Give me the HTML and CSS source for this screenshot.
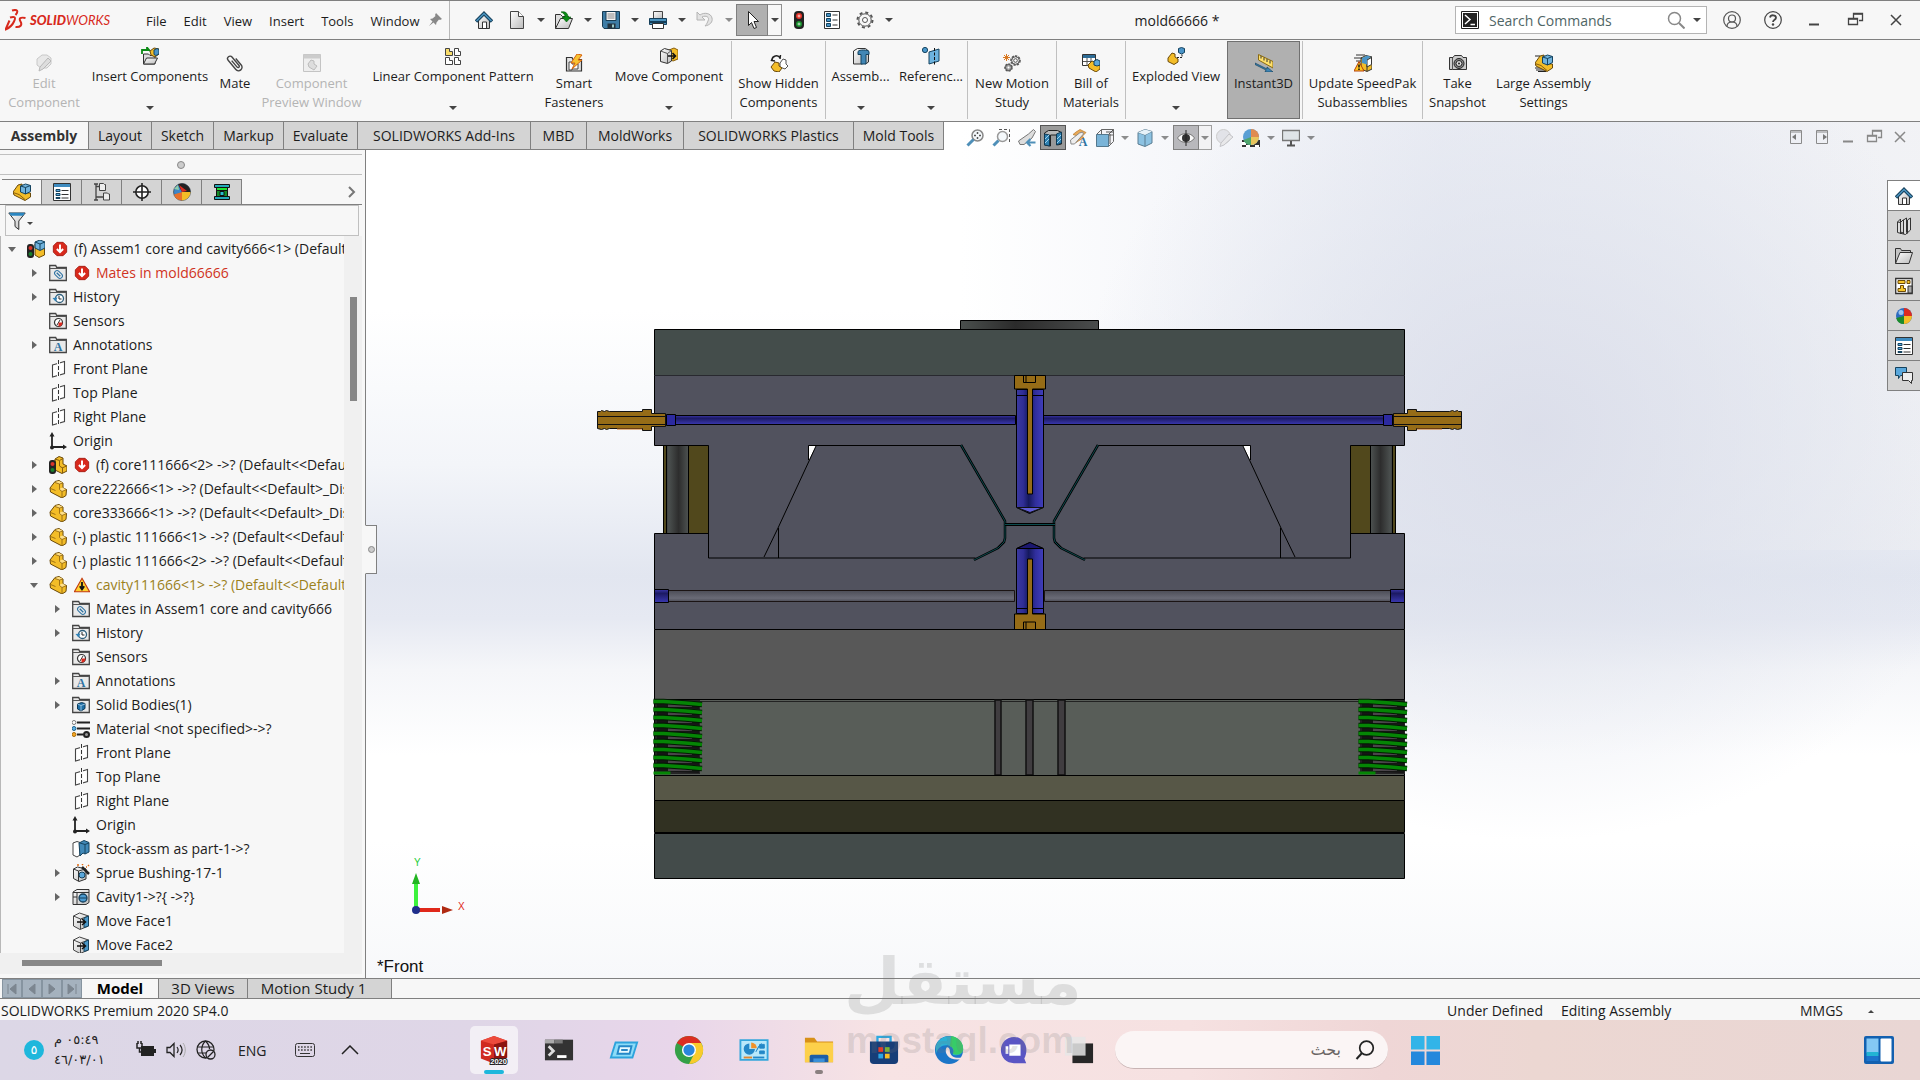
FILE: index.html
```
<!DOCTYPE html>
<html lang="en">
	<head>
		<meta charset="UTF-8" />
		<meta name="viewport" content="width=device-width, initial-scale=1.0" />
		<title>mold66666 *</title>

		<link rel="stylesheet" href="styles.css">
	</head>
	<body>
		<!-- shared icons -->
		<svg class="defs" aria-hidden="true">
			<defs>
				<linearGradient id="gBlue" x2="0" y2="1"><stop stop-color="#8fc4e8" /><stop offset="1" stop-color="#2a6c9c" /></linearGradient>
				<linearGradient id="gGray" x2="1" y2="1"><stop stop-color="#fff" /><stop offset="1" stop-color="#bbb" /></linearGradient>
			</defs>
			<symbol id="home" viewBox="0 0 18 18"><path d="M3.500 9v8.500h11V9L9 3.500z" fill="url(#gGray)" stroke="#333" /><path d="M7.500 17v-6h4v6" fill="#fff" stroke="#333" /><path d="M1 10.500 9 2.500l8 8" fill="none" stroke="#153f5a" stroke-width="3.500" /><path d="M1.500 10 9 2.500l7.500 7.500" fill="none" stroke="#4a94c0" stroke-width="1.500" /></symbol>
			<symbol id="new" viewBox="0 0 18 18"><path d="M2.500.5h8l5 5v12h-13z" fill="url(#gGray)" stroke="#444" /><path d="M10.500.5v5h5" fill="#fff" stroke="#444" /></symbol>
			<symbol id="open" viewBox="0 0 18 18"><path d="M.5 17.500v-14h5l2 2h6v3" fill="#ddd" stroke="#333" /><path d="m.5 17.500 5-10h12l-4 10z" fill="url(#gGray)" stroke="#333" /><path d="M6 1c4-1 7 1 7 5h3l-4.500 5L7 6h3c0-2-1-4-4-5z" fill="#0a8a14" stroke="#045b0a" stroke-width=".6" /></symbol>
			<symbol id="save" viewBox="0 0 18 18"><path d="M.5.5h17v17H2l-1.500-2z" fill="#3d7ca5" stroke="#173b52" /><path d="M4 .5h10v9H4z" fill="#f5f5f5" stroke="#173b52" /><path d="M5.500 3h7M5.500 5h7M5.500 7h7" stroke="#888" /><path d="M5.500 12.500h8v5h-8z" fill="#24333d" /><path d="M10 13.500h2v3h-2z" fill="#9cc" /></symbol>
			<symbol id="print" viewBox="0 0 18 18"><path d="M4.500 8V.5h9V8z" fill="url(#gGray)" stroke="#444" /><path d="M.5 7.500h17v6H.5z" fill="#4b93bf" stroke="#153f5a" /><path d="M1 10h16v2H1z" fill="#153f5a" /><path d="M3.500 12.500h11v5h-11z" fill="#fff" stroke="#333" /></symbol>
			<symbol id="undo" viewBox="0 0 18 18"><path d="M1 1v8h8L6 6c4-2 8 0 6 4-.5 1-1 3-3 5 5-1 8-4 7-8-1-5-8-6-12-3z" fill="#e3e3e3" stroke="#b4b4b4" /></symbol>
			<symbol id="cursor" viewBox="0 0 18 18"><path d="M5.500.5v14l3-3 2.500 6 2.500-1-2.500-6h4.500z" fill="#fff" stroke="#222" /></symbol>
			<symbol id="traffic" viewBox="0 0 18 18"><rect x="4" width="10" height="18" rx="4" fill="#222" /><circle cx="9" cy="5" r="3" fill="#e5342a" /><circle cx="9" cy="13" r="3" fill="#17902c" /><path d="M7.500 5h3M9 3.500v3M7.500 13h3M9 11.500v3" stroke="#fff" stroke-width=".7" /></symbol>
			<symbol id="list" viewBox="0 0 18 18"><path d="M1.500.5h15v17h-15z" fill="#fff" stroke="#333" /><path d="M3.500 2.500h4v3h-4zm0 5h4v3h-4zm0 5h4v3h-4z" fill="#4592c4" stroke="#15435f" /><path d="M9.500 4h5M9.500 9h5M9.500 14h5" stroke="#333" /></symbol>
			<symbol id="gear" viewBox="0 0 18 18"><circle cx="9" cy="9" r="7.500" fill="none" stroke="#555" stroke-width="2" stroke-dasharray="3 2.900" /><circle cx="9" cy="9" r="6.200" fill="#f7f7f7" stroke="#555" /><circle cx="9" cy="9" r="2.500" fill="#fff" stroke="#555" /></symbol>
			<symbol id="pin" viewBox="0 0 18 18"><path d="m10 2 6 6-2 1-1-.5-2.500 3L10 14l-2.500-2.500L3 15l3.500-4.500L4 8l2.500-.5 3-2.500L9 4z" fill="#888" /></symbol>
			<symbol id="term" viewBox="0 0 18 18"><path d="M.5.5h17v17H.5z" fill="#fff" stroke="#222" /><path d="M2 2h14v14H2z" fill="#222" /><path d="m4 4 5 4.500L4 13M9.500 13.500H14" fill="none" stroke="#fff" stroke-width="1.500" /></symbol>
			<symbol id="search" viewBox="0 0 18 18"><circle cx="7.500" cy="7.500" r="6" fill="none" stroke="currentColor" stroke-width="1.500" /><path d="m12 12 5.500 5.500" stroke="currentColor" stroke-width="2" /></symbol>
			<symbol id="user" viewBox="0 0 18 18"><circle cx="9" cy="9" r="8.300" fill="none" stroke="#555" stroke-width="1.200" /><circle cx="9" cy="7.500" r="3.500" fill="none" stroke="#555" stroke-width="1.200" /><path d="M4 15.500c0-3 2-4.500 5-4.500s5 1.500 5 4.500" fill="none" stroke="#555" stroke-width="1.200" /></symbol>
			<symbol id="help" viewBox="0 0 18 18"><circle cx="9" cy="9" r="8.300" fill="none" stroke="#444" stroke-width="1.200" /><path d="M6 6.500c.5-3 6-3 6 .2 0 2-3 2-3 4.300" fill="none" stroke="#444" stroke-width="1.800" /><circle cx="9" cy="13.500" r="1.200" fill="#444" /></symbol>
			<symbol id="min" viewBox="0 0 18 18"><path d="M4 13.500h10" stroke="currentColor" stroke-width="2" /></symbol>
			<symbol id="restore" viewBox="0 0 18 18"><path d="M7.500 7V2.500h9v7H13M2.500 7.500h9v6h-9z" fill="none" stroke="currentColor" stroke-width="1.300" /><path d="M7 3h10M2 8h10" stroke="currentColor" stroke-width="1.500" /></symbol>
			<symbol id="close" viewBox="0 0 18 18"><path d="m4 4 10 10M14 4 4 14" stroke="currentColor" stroke-width="1.500" /></symbol>
			<symbol id="panL" viewBox="0 0 18 18"><path d="M3.500 2.500h11v13h-11zM3 4h12" fill="none" stroke="#8a8a8a" /><path d="M9 6v6L5 9z" fill="#777" /></symbol>
			<symbol id="panR" viewBox="0 0 18 18"><path d="M3.500 2.500h11v13h-11zM3 4h12" fill="none" stroke="#8a8a8a" /><path d="M10 6v6l4-3z" fill="#777" /></symbol>
			<symbol id="part" viewBox="0 0 18 18"><path d="m1 8 5-6.500 4-1 4 2.500v5l3.500 1.500-.5 6-4 2.500L1.500 12z" fill="#f3bd28" stroke="#6b4a0a" /><path d="m6 2 4-1 4 2-3.500 1.500zM10 9l3.500-1.500L17 9.500 13 11.500z" fill="#ffe08a" /><path d="M6 2.500 10.500 4v5.500L13 11.500v6M10.500 4 14 3M13 11.500l4.500-2M1.500 8.500l5 2" fill="none" stroke="#8a5f0c" stroke-width=".8" /></symbol>
			<symbol id="asm" viewBox="0 0 18 18"><path d="m0 9 5-7 4-1v6l5 3h3.500v4L12 17.500 1 12z" fill="#f3bd28" stroke="#6b4a0a" /><path d="m0 9.500 6 2 6 5" fill="none" stroke="#8a5f0c" /><path d="m7.500 3 5-2 5 1.500v6l-5 2.500-5-2z" fill="#6fb2dc" stroke="#15435f" /><path d="m7.500 3 5 1.500 5-2M12.500 4.500V11" fill="none" stroke="#15435f" /></symbol>
			<symbol id="asmT" viewBox="0 0 18 18"><path d="m8 4 5-2.500L17.500 3v12L12 17.500 8 15z" fill="#f3bd28" stroke="#6b4a0a" /><path d="m8 2 5-2 5 2v6l-5 2.500L8 8z" fill="#6fb2dc" stroke="#15435f" /><path d="m8 2 5 2 5-2M13 4v6" fill="none" stroke="#15435f" /><rect y="4" width="7" height="14" rx="3" fill="#222" /><circle cx="3.500" cy="8" r="2" fill="#d8342a" /><circle cx="3.500" cy="14" r="2" fill="#17802c" /></symbol>
			<symbol id="partT" viewBox="0 0 18 18"><path d="m6 3 4-2.500L14 2v6l4 2v5l-5 2.500L6 14z" fill="#f3bd28" stroke="#6b4a0a" /><path d="m6 3 4.500 1.500L14 2.500M10.500 5v5l3 2v5M13 12l4.500-2" fill="none" stroke="#8a5f0c" /><rect y="4" width="7" height="14" rx="3" fill="#222" /><circle cx="3.500" cy="8" r="2" fill="#d8342a" /><circle cx="3.500" cy="14" r="2" fill="#17802c" /></symbol>
			<symbol id="folder" viewBox="0 0 18 18"><path d="M.7 16.500V1.500h6l1 2h9.600v13z" fill="#e9e9e9" stroke="#444" stroke-width="1.300" /><path d="M1 4.500h16" stroke="#555" /></symbol>
			<symbol id="clip" viewBox="0 0 18 18"><use href="#folder" /><g transform="rotate(-45 9.500 10.500)" fill="none" stroke="#2f73a3"><rect x="7" y="6" width="5" height="9" rx="2.500" /><path d="M9.500 8v5" stroke-width="1.300" /></g></symbol>
			<symbol id="history" viewBox="0 0 18 18"><use href="#folder" /><circle cx="10.500" cy="10.500" r="4" fill="#fff" stroke="#2d5e7c" stroke-width="1.300" /><path d="M10 8v3h2.500" fill="none" stroke="#222" /><path d="m3.500 10 3 3.500 2-4z" fill="#2f82b8" /></symbol>
			<symbol id="sensor" viewBox="0 0 18 18"><use href="#folder" /><circle cx="9.500" cy="10.500" r="4" fill="#fff" stroke="#333" stroke-width="1.200" /><path d="m8 13 3-5" stroke="#333" /><path d="M9.500 10.500h4a4 4 0 0 1-4 4z" fill="#dc2a20" /></symbol>
			<symbol id="solid" viewBox="0 0 18 18"><use href="#folder" /><path d="m5.500 8 4-1.500 3.500 1v5L9 15l-3.500-2z" fill="#1e6fa6" stroke="#0f3957" /><path d="m5.500 8 3.500 1.500L13 8M9 9.500V15" fill="none" stroke="#bfe0f5" stroke-width=".7" /></symbol>
			<symbol id="plane" viewBox="0 0 18 18"><path d="m3.500 5 12-3.500v12l-12 3.500z" fill="#fff" stroke="#444" stroke-width="1.100" /><path d="M9.500 0v18" stroke="#f7f7f7" stroke-width="3" /><path d="M9.500 0v18" stroke="#333" stroke-dasharray="4 2" /></symbol>
			<symbol id="origin" viewBox="0 0 18 18"><path d="M3 4v11h12" fill="none" stroke="#222" stroke-width="1.800" /><path d="M3 0 .5 4.500h5zM18 15l-4-2.500v5z" fill="#222" /><circle cx="3" cy="15.500" r="2" fill="#222" /></symbol>
			<symbol id="material" viewBox="0 0 18 18"><path d="M5 2.500h13M5 8.500h13M5 14.500h6" stroke="#222" stroke-width="1.800" /><circle cx="2" cy="2.500" r="2" fill="#fff" stroke="#777" /><circle cx="2" cy="8.500" r="2" fill="#5bb0e4" stroke="#1b5f8c" /><circle cx="2" cy="14.500" r="2" fill="#f5a623" stroke="#a76b0a" /><circle cx="14.500" cy="14.500" r="2.500" fill="#999" stroke="#222" stroke-width="2" /></symbol>
			<symbol id="stock" viewBox="0 0 18 18"><path d="m1 3 4-1.500 3 1V15l-3 2-4-2z" fill="#fff" stroke="#444" /><path d="m7 3 5-2.500 5 2V12l-4 2-2-1-3 3z" fill="#4189b8" stroke="#15435f" /><path d="m8 3 5 1.500L17 3M13 4.500V14" fill="none" stroke="#15435f" /></symbol>
			<symbol id="sprue" viewBox="0 0 18 18"><path d="m1.500 5 4-2L14 5v10l-7 2.500-5.500-3z" fill="url(#gGray)" stroke="#333" /><path d="m1.500 5 5 2 7-2M6.500 7v10" fill="none" stroke="#333" /><circle cx="10" cy="11" r="3" fill="#5aa8dc" stroke="#15435f" /><path d="m10 3 7 7" stroke="#222" stroke-width="2.500" /><path d="M5 1h2M10 0l1 1M14 3h1M16 1l1 1" stroke="#e06a10" stroke-width="1.500" /></symbol>
			<symbol id="cavity" viewBox="0 0 18 18"><path d="m1 4 4-2.500h12v13L14 16.500H1z" fill="url(#gGray)" stroke="#333" /><path d="M1 4.500h4V16M5 4.500h12M1 9h4" fill="none" stroke="#333" /><circle cx="11" cy="10" r="4" fill="#4a9ad0" stroke="#153f5a" stroke-width="1.300" /><path d="M7 10h8" stroke="#153f5a" /></symbol>
			<symbol id="face" viewBox="0 0 18 18"><path d="m1.500 4 6-3 9 3v10L8 17.500 1.500 14z" fill="url(#gGray)" stroke="#444" /><path d="m1.500 4 7 3 8-3M8.500 7v10" fill="none" stroke="#444" /><path d="m12 6 4.500-2v10L12 15.500z" fill="#4b98c8" stroke="#15435f" /><path d="M5 10h8M10 7l3.500 3-3.500 3" fill="none" stroke="#111" stroke-width="1.500" /></symbol>
			<symbol id="err" viewBox="0 0 18 18"><path d="M5.500 1.500h7l4 4v7l-4 4h-7l-4-4v-7z" fill="#d8291c" stroke="#a31a10" /><path d="M9 4v8M5.500 9 9 12.500 12.500 9" fill="none" stroke="#fff" stroke-width="2.200" /></symbol>
			<symbol id="warn" viewBox="0 0 18 18"><path d="m9 1.500 8.500 15H.5z" fill="#ffd02e" stroke="#c2390d" stroke-width="1.200" /><path d="M9 5.500v7M6.500 10.500 9 14l2.500-3.500" fill="none" stroke="#111" stroke-width="2" /></symbol>
			<symbol id="props" viewBox="0 0 18 18"><path d="M.5.5h17v17H.5z" fill="#fff" stroke="#333" /><path d="M1 1h16v3H1z" fill="#3f8cc0" /><path d="M3 6.500h4v2H3zm0 4h4v2H3zm0 4h4v1H3z" fill="#5baae0" stroke="#15435f" /><path d="M8.500 7.500h7M8.500 11.500h7M8.500 15h7" stroke="#333" /></symbol>
			<symbol id="config" viewBox="0 0 18 18"><path d="M3 1v16M3 3.500h4M3 14h7M1 1h4M1 17h4" stroke="#444" stroke-width="1.300" fill="none" /><path d="M6.500.5h4l1 1h1v6h-6zM10.500 10h4l1 1h1v6h-6z" fill="#eee" stroke="#444" /></symbol>
			<symbol id="target" viewBox="0 0 18 18"><circle cx="9" cy="9" r="6.200" fill="#fff" stroke="#222" stroke-width="1.600" /><path d="M9 0v18M0 9h18" stroke="#222" stroke-width="1.600" /></symbol>
			<symbol id="ball" viewBox="0 0 18 18"><circle cx="9" cy="9" r="8" fill="#2d6cc0" /><path d="M9 9V1a8 8 0 0 1 8 8z" fill="#dc2c20" /><path d="M9 9h8a8 8 0 0 1-8 8z" fill="#f4bd27" /><path d="M9 9v8a8 8 0 0 1-7.800-6z" fill="#1c8c2a" /><circle cx="6" cy="5.500" r="2.500" fill="#b8dcfa" opacity=".8" /></symbol>
			<symbol id="ball2" viewBox="0 0 18 18"><circle cx="9" cy="9" r="8.500" fill="#3d86c8" stroke="#333" stroke-width=".6" /><path d="M5 1.500a8.500 8.500 0 0 1 12.400 8L9 9z" fill="#222" /><path d="m6 2 8 6-5 1z" fill="#dc2c20" /><path d="M9 9h8.500A8.500 8.500 0 0 1 9 17.500z" fill="#f4bd27" /><path d="M1 11.500 9 9v8.500a8.500 8.500 0 0 1-8-6z" fill="#e8702a" /><path d="M1 6 5 2l1 5z" fill="#8fd0a8" /></symbol>
			<symbol id="mold" viewBox="0 0 18 18"><path d="M1.500 1.500h15v3h-15zm0 12h15v3h-15z" fill="#24a8b8" stroke="#111" /><path d="M3.500 4.500h11v3h-11z" fill="#1ee234" stroke="#111" /><path d="M3.500 7.500h11v6h-11z" fill="#148c28" stroke="#111" /><path d="M7 8.500h4v4H7z" fill="#26c0d0" stroke="#111" /></symbol>
			<symbol id="filter" viewBox="0 0 18 18"><path d="M.8 1h16.400l-6.400 8v8.500L7 14.500V9z" fill="url(#gGray)" stroke="#333" /><path d="M1 .8h16l-2 3H3z" fill="#2a86c0" /></symbol>
			<symbol id="editc" viewBox="0 0 18 18"><path d="m2 5 5-4h5l4 3v6l-4 4H6l-4-3z" fill="#e8e8e8" stroke="#c8c8c8" /><path d="m5 13 8-9 3 3-8 8-4 2z" fill="#ddd" stroke="#b8b8b8" /></symbol>
			<symbol id="insert" viewBox="0 0 18 18"><path d="M2.500 17V7h5l1.500 1.500h5V17z" fill="#ddd" stroke="#333" /><path d="m2.500 17 3-6h11l-3 6z" fill="url(#gGray)" stroke="#333" /><path d="M1 7V3h5V.5L9 4M2 3h6" fill="none" stroke="#0a8a14" stroke-width="1.800" /><path d="m9 4 4-3 5 1v5l-4 3-4-2z" fill="#f3bd28" stroke="#6b4a0a" /><path d="m13 3 3-1.500 2 1V7l-3 1.500-2-1z" fill="#4a94c8" stroke="#15435f" /></symbol>
			<symbol id="mate" viewBox="0 0 18 18"><g transform="rotate(-40 9 9)" fill="none" stroke="#444" stroke-width="1.400"><path d="M12.500 6v8.500a3.500 3.500 0 0 1-7 0v-12a2.500 2.500 0 0 1 5 0v11a1 1 0 0 1-2.500 0V5" /></g></symbol>
			<symbol id="preview" viewBox="0 0 18 18"><path d="M.5.5h17v17H.5z" fill="#eee" stroke="#c4c4c4" /><path d="M.5.5h17v4H.5z" fill="#ccc" /><path d="m5 10 3-4 3 1v3l3 2-3 4-5-3z" fill="#ddd" stroke="#bbb" /></symbol>
			<symbol id="pattern" viewBox="0 0 18 18"><path d="M1.500 1.500h4v3h3v4h-7z" fill="#f8dc6a" stroke="#444" /><path d="M10.500 1.500h4v3h2v4h-6zm0 9h4v3h2v4h-6zm-9 0h4v3h3v4h-7z" fill="#fff" stroke="#444" /></symbol>
			<symbol id="smart" viewBox="0 0 18 18"><path d="M1.500 17V3.500H7l1 2h8.500V17z" fill="#e4e4e4" stroke="#333" stroke-width="1.200" /><path d="M4 8h3v2h6v5H7v1H4z" fill="#fff" stroke="#444" /><path d="m12 0-6 9h4l-3 6 10-9h-4l4-5z" fill="#f7c331" stroke="#d8620c" /></symbol>
			<symbol id="move" viewBox="0 0 18 18"><path d="m9 3 5-2 4 2v9l-5 2-4-2z" fill="#f3bd28" stroke="#8a5f0c" /><path d="m.5 4 4-2.500 7 2V14l-4 2.500-7-2z" fill="url(#gGray)" stroke="#333" /><path d="m.5 4 7 2.500 4-3M7.500 6.500v10" fill="none" stroke="#555" /><path d="M8 9h7M12.500 6l3 3-3 3" fill="none" stroke="#111" stroke-width="1.600" /></symbol>
			<symbol id="hidden" viewBox="0 0 18 18"><path d="M2 6c0-4 6-6 8-2M3 3 1.500 6.500 5 7M10 5l.5-4" fill="none" stroke="#222" stroke-width="1.500" /><path d="m10 9 3-4 3 1v4l2 2-3 3-5-2z" fill="#fff" stroke="#555" /><path d="m1 13 4-5 4 1v3l3 2-3 4-5-1z" fill="#f3bd28" stroke="#6b4a0a" /></symbol>
			<symbol id="assemb" viewBox="0 0 18 18"><path d="m1.500 4 4-2.500h8l3 2.500v11l-3 2v-5h-3V17h-9z" fill="url(#gGray)" stroke="#333" /><path d="M6 4.500C7 2.500 16 2.500 17 4.500v3h-3V17H9V7.500H6z" fill="#4287b5" stroke="#15435f" /></symbol>
			<symbol id="refgeo" viewBox="0 0 18 18"><circle cx="3" cy="3" r="2.600" fill="#4a98cc" stroke="#15435f" /><path d="m7 5 10-3v12L7 17z" fill="#6db3df" stroke="#15435f" /><path d="M12.500 1v17" stroke="#111" stroke-dasharray="3 1.500" /></symbol>
			<symbol id="motion" viewBox="0 0 18 18"><path d="M3.500 0v7M0 3.500h7M1 1l5 5M6 1 1 6" stroke="#d97820" /><circle cx="12.500" cy="6.500" r="4.300" fill="#eee" stroke="#555" stroke-width="2" stroke-dasharray="2.200 1" /><circle cx="12.500" cy="6.500" r="3.800" fill="#eee" stroke="#555" /><circle cx="12.500" cy="6.500" r="1.800" fill="#fff" stroke="#555" /><circle cx="5.500" cy="13.500" r="3.300" fill="#aaa" stroke="#555" stroke-width="2" stroke-dasharray="2 1" /><circle cx="5.500" cy="13.500" r="3" fill="#aaa" stroke="#555" /><circle cx="5.500" cy="13.500" r="1" fill="#fff" /></symbol>
			<symbol id="bom" viewBox="0 0 18 18"><path d="M.5.5h13v11H.5z" fill="#fff" stroke="#333" /><path d="M1 1h12v3H1z" fill="#2d6c96" /><path d="M1 7.500h12M5 4v8M9 4v8" stroke="#555" /><path d="m6 11 4-4 6 2 2 3v3l-4 3-7-4z" fill="#f3bd28" stroke="#6b4a0a" /><path d="m12 7 3-1.500L18 7v4l-3 1-3-1z" fill="#5ea8d8" stroke="#15435f" /></symbol>
			<symbol id="explode" viewBox="0 0 18 18"><path d="m1 11 4-5 3 1v3l3 2v3l-4 2.500-6-3z" fill="#f3bd28" stroke="#6b4a0a" /><path d="m11.500 1.500 3-1 3 1v4l-3 1.500-3-1.500z" fill="#4a94c8" stroke="#15435f" /><path d="M10 10.500h5V7" fill="none" stroke="#222" stroke-dasharray="2 1" /></symbol>
			<symbol id="instant" viewBox="0 0 18 18"><path d="m3.500.5 14.500 7v6.500L3.500 6z" fill="#ffe06a" stroke="#8a6a10" /><path d="M6 2v2.500m3-1v3m3-1.500v3m3-1.500v3" stroke="#333" /><path d="m0 9 12 6 0-2 6 5h-8l1-2L0 10.500z" fill="#3d84b4" stroke="#15435f" stroke-width=".7" /></symbol>
			<symbol id="speed" viewBox="0 0 18 18"><path d="M2 1h9M0 4h8M2 7h5" stroke="#333" /><path d="m7 4 5-2.500L18 3v12l-5 2.500L7 15z" fill="#f3bd28" stroke="#333" /><path d="m7 4 6 2 5-3M13 6v11" fill="none" stroke="#333" /><path d="m13 6 4.500-2.500v7L13 13z" fill="#fff" stroke="#333" /><path d="m8 4 5-2.500 4 1.500-4 2.500v5L8 9z" fill="#4a94c8" /><path d="M5 7.500 10 17H0z" fill="#ffc61e" stroke="#b5410c" /><path d="M5 10.500v3M5 14.500v1.500" stroke="#111" stroke-width="1.500" /></symbol>
			<symbol id="camera" viewBox="0 0 18 18"><path d="M.5 3.500H4l1.500-2h7l1.500 2h3.500v12H.5z" fill="#ccc" stroke="#333" /><path d="M3.500 4v12" stroke="#555" /><circle cx="10" cy="9.500" r="5" fill="#888" stroke="#222" /><circle cx="10" cy="9.500" r="3" fill="#ddd" stroke="#222" /><circle cx="10" cy="9.500" r="1" fill="#222" /></symbol>
			<symbol id="large" viewBox="0 0 18 18"><path d="M0 2h5M0 14h8M1 16h10M3 17.500h8" stroke="#222" /><use href="#asm" /></symbol>
			<symbol id="zfit" viewBox="0 0 18 18"><circle cx="11.500" cy="6.500" r="5.500" fill="#f4f8fb" stroke="#888" stroke-width="1.500" /><path d="M11.500 3v2M11.500 8v2M8 6.500h2M13 6.500h2" stroke="#555" stroke-width="1.500" /><path d="m1.500 16.500 6-6" stroke="#4e8fb8" stroke-width="3" /></symbol>
			<symbol id="zarea" viewBox="0 0 18 18"><path d="M7 .5h10.500v14" fill="none" stroke="#555" stroke-dasharray="3 2" /><circle cx="10.500" cy="7.500" r="5" fill="#f4f8fb" stroke="#999" stroke-width="1.500" /><path d="m1.500 16.500 5-5" stroke="#4e8fb8" stroke-width="3" /></symbol>
			<symbol id="zprev" viewBox="0 0 18 18"><path d="m.5 12 10-7 5-4.500 2 2L14 9 6 15.500H2z" fill="#ddd" stroke="#777" /><path d="M9 13.500h8.500M12.500 10 9 13.500l3.500 3.500" fill="none" stroke="#4e8fb8" stroke-width="2.200" /></symbol>
			<symbol id="section" viewBox="0 0 18 18"><path d="m.5 4 4-2.500h9l4 2V15l-4 1V6h-7v11l-6-1z" fill="#b8b8b8" stroke="#222" /><path d="m.5 5 5 1v11l-5-1zm12 0 5-2v11l-5 2z" fill="#2d7fb0" stroke="#103a54" /><path d="m1 10 4-4M1 14l4-4M13 10l4-4M13 14l4-4" stroke="#9fd2ee" /></symbol>
			<symbol id="dynann" viewBox="0 0 18 18"><path d="m6 3 4-2.500 6 3-4 4 2 1-8 5 3-6-6-2z" fill="#e9a958" stroke="#b87828" stroke-width=".7" /><path d="m.5 11 9-7 3-1 1 2-9 10H1z" fill="#eee" stroke="#888" /></symbol>
			<symbol id="orient" viewBox="0 0 18 18"><path d="m.5 5.500 5-5h12v12l-5 5M5.500.5v5M17.500 6h-5" fill="#f4f4f8" stroke="#666" /><path d="M.5 5.500h12v12H.5z" fill="#7ab4d8" stroke="#54788e" /><path d="m12.500 5.500 5-5M10 3h7M14 5v10" stroke="#555" /></symbol>
			<symbol id="display" viewBox="0 0 18 18"><path d="m2 3.500 7-3 7 2V14l-7 3.500L2 15z" fill="#8cc2e2" stroke="#5a7d92" /><path d="m2 3.500 7 2.500 7-3.500M9 6v11" fill="none" stroke="#5a7d92" /><path d="m2 3.500 7-3 7 2L9 6z" fill="#e6f2f9" /></symbol>
			<symbol id="eye" viewBox="0 0 18 18"><path d="M.5 9C4 3 14 3 17.500 9 14 15 4 15 .5 9z" fill="#f8f8f8" stroke="#777" /><circle cx="9" cy="9" r="4" fill="#333" /><path d="M9 1v16" stroke="#222" /></symbol>
			<symbol id="appear" viewBox="0 0 18 18"><circle cx="7.500" cy="7.500" r="7" fill="#e2e3e8" stroke="#ccc" /><path d="m5 14 8-9 4 3-9 8-4 1.500z" fill="#e8e8ea" stroke="#c4c4c8" /></symbol>
			<symbol id="scene" viewBox="0 0 18 18"><path d="M0 11h18v7H0z" fill="#333" /><path d="M0 13h4v3H0zm8 0h4v3H8zm-4 3h4v2H4zm9 0h4v2h-4z" fill="#fff" /><circle cx="9" cy="8" r="8" fill="#5a9fd4" /><path d="M9 8V0a8 8 0 0 1 8 8z" fill="#e08b50" /><path d="M9 8h8a8 8 0 0 1-8 8z" fill="#e9c55c" /><path d="M9 8v8a8 8 0 0 1-7.500-5z" fill="#4ea56c" /></symbol>
			<symbol id="monitor" viewBox="0 0 18 18"><path d="M.5 1.500h17v10H.5z" fill="#dfe4e8" stroke="#777" stroke-width="1.300" /><path d="M9 12v4M5 16.500h8" stroke="#555" stroke-width="2" /></symbol>
			<symbol id="books" viewBox="0 0 18 18"><path d="m2.500 5 3-3v13l3 1V3l3-2v14l1 1V3l3-2v12l-5 4.500-8-2z" fill="#ddd" stroke="#333" /><path d="M5.500 5v12M8.500 5v12M12 4v13M2.500 5l3 .5 3-3" fill="none" stroke="#333" /></symbol>
			<symbol id="fold" viewBox="0 0 18 18"><path d="M.5 16.500v-15h5l1 2h9v4" fill="#c4c4c4" stroke="#333" /><path d="M.5 16.500 5 5.500h12.500L14 16.500z" fill="url(#gGray)" stroke="#333" /></symbol>
			<symbol id="palette" viewBox="0 0 18 18"><path d="M.7 1.500h16.500v15H.7z" fill="#fff" stroke="#333" stroke-width="1.300" /><path d="M3 3.500h7v3H3zm9 0h3v3h-3zM5.500 8.500h3v3h2v3H3v-3h2.500z" fill="#f6c52a" stroke="#6b4a0a" /><path d="M13 9h4v7h-4z" fill="#aaa" stroke="#333" /></symbol>
			<symbol id="forum" viewBox="0 0 18 18"><path d="M.5.5h11v8h-6l-2 3v-3h-3z" fill="#5aa8dc" stroke="#15435f" /><path d="M7.500 5.500h10v8h-1v3l-3-3h-6z" fill="#eee" stroke="#333" /></symbol>
		</svg>

		<header class="titlebar">
			<a class="brand" href="#">
				<svg width="22" height="22" viewBox="0 0 22 22" aria-hidden="true"><path d="M7 1.500c5-1.500 7 .5 3.500 4.500M5 8.500c5-1.500 6 0 4 4-1.500 3.500-4 6-8.500 8l4-9M20.500 9c-5-1-7 0-5 3.500 2 3.500 0 6-5 5.500" fill="none" stroke="#d8291c" stroke-width="2" /></svg>
				<span class="brand-text"><b>SOLID</b>WORKS</span>
			</a>
			<nav class="menu">
				<a href="#">File</a>
				<a href="#">Edit</a>
				<a href="#">View</a>
				<a href="#">Insert</a>
				<a href="#">Tools</a>
				<a href="#">Window</a>
			</nav>
			<button class="tool" aria-label="Pin menu"><svg class="icon"><use href="#pin" /></svg></button>
			<div class="quick">
				<button class="tool home" aria-label="Home"><svg class="icon"><use href="#home" /></svg></button>
				<button class="tool" aria-label="New"><svg class="icon"><use href="#new" /></svg></button>
				<button class="drop" aria-label="New options"></button>
				<button class="tool" aria-label="Open"><svg class="icon"><use href="#open" /></svg></button>
				<button class="drop" aria-label="Open options"></button>
				<button class="tool" aria-label="Save"><svg class="icon"><use href="#save" /></svg></button>
				<button class="drop" aria-label="Save options"></button>
				<button class="tool" aria-label="Print"><svg class="icon"><use href="#print" /></svg></button>
				<button class="drop" aria-label="Print options"></button>
				<button class="tool" aria-label="Undo"><svg class="icon"><use href="#undo" /></svg></button>
				<button class="drop dim" aria-label="Undo options"></button>
				<button class="tool select" aria-label="Select"><svg class="icon"><use href="#cursor" /></svg></button>
				<button class="drop select-drop" aria-label="Select options"></button>
				<button class="tool spaced" aria-label="Rebuild"><svg class="icon"><use href="#traffic" /></svg></button>
				<button class="tool spaced" aria-label="File properties"><svg class="icon"><use href="#list" /></svg></button>
				<button class="tool spaced" aria-label="Options"><svg class="icon"><use href="#gear" /></svg></button>
				<button class="drop" aria-label="More options"></button>
			</div>
			<h1 class="doc-title">mold66666 *</h1>
			<form class="command-search">
				<svg class="icon"><use href="#term" /></svg>
				<input type="search" aria-label="Search Commands" placeholder="Search Commands" />
				<svg class="icon"><use href="#search" /></svg>
				<span class="caret"></span>
			</form>
			<div class="window-buttons">
				<button aria-label="Account"><svg class="icon"><use href="#user" /></svg></button>
				<button aria-label="Help"><svg class="icon"><use href="#help" /></svg></button>
				<button aria-label="Minimize"><svg class="icon"><use href="#min" /></svg></button>
				<button aria-label="Restore"><svg class="icon"><use href="#restore" /></svg></button>
				<button aria-label="Close"><svg class="icon"><use href="#close" /></svg></button>
			</div>
		</header>

		<div class="ribbon">
			<button class="cmd" disabled><svg class="icon"><use href="#editc" /></svg><span>Edit<br />Component</span></button>
			<button class="cmd menu-cmd"><svg class="icon"><use href="#insert" /></svg><span>Insert Components</span><i class="caret"></i></button>
			<button class="cmd"><svg class="icon"><use href="#mate" /></svg><span>Mate</span></button>
			<button class="cmd" disabled><svg class="icon"><use href="#preview" /></svg><span>Component<br />Preview Window</span></button>
			<button class="cmd menu-cmd"><svg class="icon"><use href="#pattern" /></svg><span>Linear Component Pattern</span><i class="caret"></i></button>
			<button class="cmd"><svg class="icon"><use href="#smart" /></svg><span>Smart<br />Fasteners</span></button>
			<button class="cmd menu-cmd"><svg class="icon"><use href="#move" /></svg><span>Move Component</span><i class="caret"></i></button>
			<button class="cmd group"><svg class="icon"><use href="#hidden" /></svg><span>Show Hidden<br />Components</span></button>
			<button class="cmd menu-cmd group"><svg class="icon"><use href="#assemb" /></svg><span>Assemb...</span><i class="caret"></i></button>
			<button class="cmd menu-cmd"><svg class="icon"><use href="#refgeo" /></svg><span>Referenc...</span><i class="caret"></i></button>
			<button class="cmd group"><svg class="icon"><use href="#motion" /></svg><span>New Motion<br />Study</span></button>
			<button class="cmd group"><svg class="icon"><use href="#bom" /></svg><span>Bill of<br />Materials</span></button>
			<button class="cmd menu-cmd group"><svg class="icon"><use href="#explode" /></svg><span>Exploded View</span><i class="caret"></i></button>
			<button class="cmd pressed"><svg class="icon"><use href="#instant" /></svg><span>Instant3D</span></button>
			<button class="cmd group"><svg class="icon"><use href="#speed" /></svg><span>Update SpeedPak<br />Subassemblies</span></button>
			<button class="cmd group"><svg class="icon"><use href="#camera" /></svg><span>Take<br />Snapshot</span></button>
			<button class="cmd"><svg class="icon"><use href="#large" /></svg><span>Large Assembly<br />Settings</span></button>
		</div>

		<main class="workspace">
			<div class="tab-row">
				<nav class="tabs">
					<a class="active" href="#">Assembly</a>
					<a href="#">Layout</a>
					<a href="#">Sketch</a>
					<a href="#">Markup</a>
					<a href="#">Evaluate</a>
					<a href="#">SOLIDWORKS Add-Ins</a>
					<a href="#">MBD</a>
					<a href="#">MoldWorks</a>
					<a href="#">SOLIDWORKS Plastics</a>
					<a href="#">Mold Tools</a>
				</nav>
				<div class="heads-up">
					<button aria-label="Zoom to fit"><svg class="icon"><use href="#zfit" /></svg></button>
					<button aria-label="Zoom to area"><svg class="icon"><use href="#zarea" /></svg></button>
					<button aria-label="Previous view"><svg class="icon"><use href="#zprev" /></svg></button>
					<button class="on" aria-label="Section view"><svg class="icon"><use href="#section" /></svg></button>
					<button aria-label="Dynamic annotation views"><svg class="icon" viewBox="0 0 18 18"><use href="#dynann" /><text x="13" y="17" text-anchor="middle" class="icon-a">A</text></svg></button>
					<button aria-label="View orientation"><svg class="icon"><use href="#orient" /></svg></button>
					<button class="more" aria-label="Orientation options"></button>
					<button aria-label="Display style"><svg class="icon"><use href="#display" /></svg></button>
					<button class="more" aria-label="Display options"></button>
					<button class="on light" aria-label="Hide/show items"><svg class="icon"><use href="#eye" /></svg></button>
					<button class="more boxed" aria-label="Hide/show options"></button>
					<button aria-label="Edit appearance"><svg class="icon"><use href="#appear" /></svg></button>
					<button aria-label="Apply scene"><svg class="icon"><use href="#scene" /></svg></button>
					<button class="more" aria-label="Scene options"></button>
					<button aria-label="View settings"><svg class="icon"><use href="#monitor" /></svg></button>
					<button class="more" aria-label="View settings options"></button>
				</div>
				<div class="doc-buttons">
					<button aria-label="Previous pane"><svg class="icon"><use href="#panL" /></svg></button>
					<button aria-label="Next pane"><svg class="icon"><use href="#panR" /></svg></button>
					<button aria-label="Minimize document"><svg class="icon"><use href="#min" /></svg></button>
					<button aria-label="Restore document"><svg class="icon"><use href="#restore" /></svg></button>
					<button aria-label="Close document"><svg class="icon"><use href="#close" /></svg></button>
				</div>
			</div>

			<div class="stage">
				<aside class="panel">
					<div class="grip"></div>
					<div class="panel-tabs">
						<button class="active" aria-label="FeatureManager"><svg class="icon"><use href="#asm" /></svg></button>
						<button aria-label="PropertyManager"><svg class="icon"><use href="#props" /></svg></button>
						<button aria-label="ConfigurationManager"><svg class="icon"><use href="#config" /></svg></button>
						<button aria-label="DimXpertManager"><svg class="icon"><use href="#target" /></svg></button>
						<button aria-label="DisplayManager"><svg class="icon"><use href="#ball2" /></svg></button>
						<button aria-label="MoldWorks"><svg class="icon"><use href="#mold" /></svg></button>
						<button class="expand" aria-label="Expand"><svg width="8" height="12" viewBox="0 0 8 12"><path d="m1 1 5 5-5 5" fill="none" stroke="#777" stroke-width="2" /></svg></button>
					</div>
					<div class="filter">
						<svg class="icon"><use href="#filter" /></svg>
						<span class="caret"></span>
						<input type="text" aria-label="Filter tree" />
					</div>
					<div class="tree-box">
						<ul class="tree">
							<li class="root"><button class="twist open" aria-label="Collapse"></button><svg class="icon"><use href="#asmT" /></svg><svg class="state"><use href="#err" /></svg><span>(f) Assem1 core and cavity666&lt;1&gt; (Default&lt;Display State-1&gt;)</span></li>
							<li class="red"><button class="twist" aria-label="Expand"></button><svg class="icon"><use href="#clip" /></svg><svg class="state"><use href="#err" /></svg><span>Mates in mold66666</span></li>
							<li><button class="twist" aria-label="Expand"></button><svg class="icon"><use href="#history" /></svg><span>History</span></li>
							<li><i class="twist"></i><svg class="icon"><use href="#sensor" /></svg><span>Sensors</span></li>
							<li><button class="twist" aria-label="Expand"></button><svg class="icon" viewBox="0 0 18 18"><use href="#folder" /><text x="9" y="15" text-anchor="middle" class="icon-a">A</text></svg><span>Annotations</span></li>
							<li><i class="twist"></i><svg class="icon"><use href="#plane" /></svg><span>Front Plane</span></li>
							<li><i class="twist"></i><svg class="icon"><use href="#plane" /></svg><span>Top Plane</span></li>
							<li><i class="twist"></i><svg class="icon"><use href="#plane" /></svg><span>Right Plane</span></li>
							<li><i class="twist"></i><svg class="icon"><use href="#origin" /></svg><span>Origin</span></li>
							<li><button class="twist" aria-label="Expand"></button><svg class="icon"><use href="#partT" /></svg><svg class="state"><use href="#err" /></svg><span>(f) core111666&lt;2&gt; -&gt;? (Default&lt;&lt;Default&gt;_Display</span></li>
							<li><button class="twist" aria-label="Expand"></button><svg class="icon"><use href="#part" /></svg><span>core222666&lt;1&gt; -&gt;? (Default&lt;&lt;Default&gt;_Display</span></li>
							<li><button class="twist" aria-label="Expand"></button><svg class="icon"><use href="#part" /></svg><span>core333666&lt;1&gt; -&gt;? (Default&lt;&lt;Default&gt;_Display</span></li>
							<li><button class="twist" aria-label="Expand"></button><svg class="icon"><use href="#part" /></svg><span>(-) plastic 111666&lt;1&gt; -&gt;? (Default&lt;&lt;Default&gt;</span></li>
							<li><button class="twist" aria-label="Expand"></button><svg class="icon"><use href="#part" /></svg><span>(-) plastic 111666&lt;2&gt; -&gt;? (Default&lt;&lt;Default&gt;</span></li>
							<li class="olive"><button class="twist open" aria-label="Collapse"></button><svg class="icon"><use href="#part" /></svg><svg class="state"><use href="#warn" /></svg><span>cavity111666&lt;1&gt; -&gt;? (Default&lt;&lt;Default&gt;</span></li>
							<li class="sub"><button class="twist" aria-label="Expand"></button><svg class="icon"><use href="#clip" /></svg><span>Mates in Assem1 core and cavity666</span></li>
							<li class="sub"><button class="twist" aria-label="Expand"></button><svg class="icon"><use href="#history" /></svg><span>History</span></li>
							<li class="sub"><i class="twist"></i><svg class="icon"><use href="#sensor" /></svg><span>Sensors</span></li>
							<li class="sub"><button class="twist" aria-label="Expand"></button><svg class="icon" viewBox="0 0 18 18"><use href="#folder" /><text x="9" y="15" text-anchor="middle" class="icon-a">A</text></svg><span>Annotations</span></li>
							<li class="sub"><button class="twist" aria-label="Expand"></button><svg class="icon"><use href="#solid" /></svg><span>Solid Bodies(1)</span></li>
							<li class="sub"><i class="twist"></i><svg class="icon"><use href="#material" /></svg><span>Material &lt;not specified&gt;-&gt;?</span></li>
							<li class="sub"><i class="twist"></i><svg class="icon"><use href="#plane" /></svg><span>Front Plane</span></li>
							<li class="sub"><i class="twist"></i><svg class="icon"><use href="#plane" /></svg><span>Top Plane</span></li>
							<li class="sub"><i class="twist"></i><svg class="icon"><use href="#plane" /></svg><span>Right Plane</span></li>
							<li class="sub"><i class="twist"></i><svg class="icon"><use href="#origin" /></svg><span>Origin</span></li>
							<li class="sub"><i class="twist"></i><svg class="icon"><use href="#stock" /></svg><span>Stock-assm as part-1-&gt;?</span></li>
							<li class="sub"><button class="twist" aria-label="Expand"></button><svg class="icon"><use href="#sprue" /></svg><span>Sprue Bushing-17-1</span></li>
							<li class="sub"><button class="twist" aria-label="Expand"></button><svg class="icon"><use href="#cavity" /></svg><span>Cavity1-&gt;?{ -&gt;?}</span></li>
							<li class="sub"><i class="twist"></i><svg class="icon"><use href="#face" /></svg><span>Move Face1</span></li>
							<li class="sub"><i class="twist"></i><svg class="icon"><use href="#face" /></svg><span>Move Face2</span></li>
						</ul>
						<div class="vscroll"><i></i></div>
					</div>
					<div class="hscroll"><i></i></div>
				</aside>

				<section class="canvas">
					<button class="splitter" aria-label="Hide panel"></button>
					<svg class="model" viewBox="366 150 1554 828" role="img" aria-label="Mold section view">
						<defs>
							<linearGradient id="flange"><stop stop-color="#4a4f4d" /><stop offset=".4" stop-color="#2b2b2b" /><stop offset="1" stop-color="#4a4c4c" /></linearGradient>
							<linearGradient id="pillar"><stop stop-color="#3a3d3c" /><stop offset=".1" stop-color="#4b504f" /><stop offset=".55" stop-color="#2d2d2d" /><stop offset="1" stop-color="#4d5251" /></linearGradient>
							<linearGradient id="tube"><stop stop-color="#3b3aa0" /><stop offset=".25" stop-color="#2f2d95" /><stop offset=".45" stop-color="#15195e" /><stop offset=".7" stop-color="#302e9c" /><stop offset="1" stop-color="#403ebc" /></linearGradient>
							<linearGradient id="pipe" x2="0" y2="1"><stop stop-color="#3a36a8" /><stop offset=".3" stop-color="#1c1a63" /><stop offset="1" stop-color="#3a38b0" /></linearGradient>
							<linearGradient id="vent" x2="0" y2="1"><stop stop-color="#4c4d57" /><stop offset=".7" stop-color="#6a6b77" /><stop offset="1" stop-color="#4c4d57" /></linearGradient>
							<!-- one coil of the return spring -->
							<g id="coil"><path d="M657 704.500 699 706.500" stroke="#151515" stroke-width="5" /><path d="M668 705.500h24" stroke="#4a454a" stroke-width="3" /><path d="M653.500 701.500h10l22 1.500 16.500 1.500" stroke="#031a03" stroke-width="5.500" fill="none" /><path d="M653.500 701.500h10l22 1.500 16.500 1.500" stroke="#058505" stroke-width="3.500" fill="none" /></g>
							<g id="spring">
								<path d="M655 700h45v74h-45z" fill="#262526" />
								<use href="#coil" /><use href="#coil" y="8" /><use href="#coil" y="16" /><use href="#coil" y="24" /><use href="#coil" y="32" /><use href="#coil" y="40" /><use href="#coil" y="48" /><use href="#coil" y="56" /><use href="#coil" y="64" />
								<path d="M653.500 773h17" stroke="#058505" stroke-width="3" />
							</g>
							<g id="half">
								<path d="M663.500 445.500h45v88h-45z" fill="#51481c" stroke="#000" />
								<path d="M666.500 445.500h22v88h-22z" fill="url(#pillar)" stroke="#000" />
								<path d="M654.500 375.500h377v254h-377v-96h54v-88h-54z" fill="#51525e" stroke="none" />
								<path d="M654.500 629.500v-96h54M654.500 375.500v70h54v112.500h267" fill="none" stroke="#000" />
								<path d="M809 446h7l-7 14z" fill="#fff" />
								<path d="M808.500 460v-14.500h152.500M816 446l-38 82-14 29M778.500 528v30" fill="none" stroke="#000" />
								<path d="m961 445 44 76v17l-1 4-6 6-24 12" fill="none" stroke="#000" stroke-width="2.500" />
								<path d="m961 445 44 76v17l-1 4-6 6-24 12" fill="none" stroke="#0b4a4e" />
								<path d="M672.500 415.500h343v9h-343z" fill="url(#pipe)" stroke="#000" />
								<path d="M666.500 414.500h9v11h-9z" fill="#2c2aa0" stroke="#000" />
								<path d="M597.500 411.500h3l1-1 3 1 2-1 3 1h33v-2h9v4h14v13h-14v4h-9v-2h-33l-3 1-2-1-3 1-4-1z" fill="#966c17" stroke="#111" />
								<path d="M597.500 416.500h68M597.500 424.500h68" stroke="#111" />
								<path d="M617 429h25" stroke="#c76a14" />
								<path d="M668.500 590.500h346v11h-346z" fill="url(#vent)" stroke="#1b1414" />
								<path d="M654.500 589.500h14v13h-14z" fill="url(#pipe)" stroke="#000" />
							</g>
							<g id="bush">
								<path d="M1016.500 389.500h27v118l-14 6-13-6z" fill="url(#tube)" stroke="#000" />
								<path d="M1017 507.500h26l-13 5z" fill="#5f5cd6" stroke="#111" />
								<path d="M1016 395.500h28" stroke="#000" />
								<path d="M1014.500 375.500h31v13.500h-13v105h-5v-105h-13z" fill="#966c17" stroke="#000" />
								<path d="M1023.500 375.500h12v7h-12zM1026 376v6" fill="none" stroke="#000" />
							</g>
						</defs>
						<path d="M960.500 320.500h138v9h-138z" fill="url(#flange)" stroke="#000" />
						<path d="M654.500 329.500h750v46h-750z" fill="#444d4b" stroke="#000" />
						<use href="#half" />
						<use href="#half" transform="matrix(-1 0 0 1 2059 0)" />
						<path d="M1005 524.500h50" stroke="#000" stroke-width="3" /><path d="M1005 524.500h50" stroke="#0b4a4e" />
						<use href="#bush" />
						<path d="M1016.500 613.500v-65l13-6 14 6v65z" fill="url(#tube)" stroke="#000" />
						<path d="m1017 548.500 13-6 13 6z" fill="#1b176f" stroke="#000" />
						<path d="M1016 608.500h28" stroke="#000" />
						<path d="M1014.500 629.500v-15.500h13v-55h5v55h13v15.500z" fill="#966c17" stroke="#000" />
						<path d="M1023.500 629v-7h12v7M1026 622v7" fill="none" stroke="#000" />
						<path d="M654.500 629.500h750v70h-750z" fill="#585858" stroke="#000" />
						<path d="M654.500 699.500h750v76h-750z" fill="#585d58" stroke="#000" />
						<path d="M655 701.500h749" stroke="#222" />
						<path d="M995 700h6v75h-6zm31 0h7v75h-7zm32 0h7v75h-7z" fill="#403d40" stroke="#111" stroke-width="1.500" />
						<use href="#spring" />
						<use href="#spring" x="705" />
						<path d="M654.500 775.500h750v25h-750z" fill="#575747" stroke="#000" />
						<path d="M654.500 800.500h750v32h-750z" fill="#313122" stroke="#000" />
						<path d="M654.500 833.500h750v45h-750z" fill="#434b4a" stroke="#000" />
						<g class="triad">
							<path d="M416 908v-24" stroke="#3df23d" stroke-width="4" />
							<path d="m416 873 4 11h-8z" fill="#22b422" />
							<path d="M418 910h22" stroke="#e0281a" stroke-width="4" />
							<path d="m453 910-11-4v8z" fill="#b02a12" />
							<circle cx="416" cy="910" r="4" fill="#1f2f8c" />
							<text x="414" y="866" fill="#22cc33">Y</text>
							<text x="458" y="910" fill="#e0281a">X</text>
						</g>
					</svg>
					<p class="view-name">*Front</p>
				</section>

				<div class="task-pane">
					<button class="active" aria-label="Resources"><svg class="icon"><use href="#home" /></svg></button>
					<button aria-label="Design library"><svg class="icon"><use href="#books" /></svg></button>
					<button aria-label="File explorer"><svg class="icon"><use href="#fold" /></svg></button>
					<button aria-label="View palette"><svg class="icon"><use href="#palette" /></svg></button>
					<button aria-label="Appearances"><svg class="icon"><use href="#ball" /></svg></button>
					<button aria-label="Custom properties"><svg class="icon"><use href="#props" /></svg></button>
					<button aria-label="Forum"><svg class="icon"><use href="#forum" /></svg></button>
				</div>
			</div>
		</main>

		<div class="model-tabs">
			<div class="steps">
				<button aria-label="First"><svg viewBox="0 0 12 12"><path d="M2 1v10M10 1v10L4 6z" /></svg></button>
				<button aria-label="Previous"><svg viewBox="0 0 12 12"><path d="M9 1v10L3 6z" /></svg></button>
				<button aria-label="Next"><svg viewBox="0 0 12 12"><path d="M3 1v10l6-5z" /></svg></button>
				<button aria-label="Last"><svg viewBox="0 0 12 12"><path d="M10 1v10M2 1v10l6-5z" /></svg></button>
			</div>
			<a class="active" href="#">Model</a>
			<a href="#">3D Views</a>
			<a class="wide" href="#">Motion Study 1</a>
		</div>

		<footer class="status">
			<span class="product">SOLIDWORKS Premium 2020 SP4.0</span>
			<span>Under Defined</span>
			<span class="editing">Editing Assembly</span>
			<span>MMGS</span>
			<i class="caret up"></i>
		</footer>

		<div class="taskbar">
			<div class="tray">
				<span class="badge">٥</span>
				<div class="clock" dir="rtl"><span>٠٥:٤٩ م</span><span>٤٦/٠٣/٠١</span></div>
				<svg width="20" height="18" viewBox="0 0 20 18" aria-label="Battery"><path d="M5 5h13v10H5z" fill="#222" /><path d="M18 8h2v4h-2z" fill="#222" /><path d="M1 2v5h5V2M3.500 7v4h3M2 0v3M5 0v3" fill="none" stroke="#222" stroke-width="1.500" /></svg>
				<svg width="20" height="16" viewBox="0 0 20 16" aria-label="Volume"><path d="M1 5.500h3l4-4v13l-4-4H1z" fill="none" stroke="#222" stroke-width="1.300" /><path d="M11 5c1.500 2 1.500 4 0 6M14 3c2.500 3 2.500 7 0 10" fill="none" stroke="#222" stroke-width="1.200" /><path d="M17 1c3 4 3 10 0 14" fill="none" stroke="#aaa" /></svg>
				<svg width="20" height="20" viewBox="0 0 20 20" aria-label="No internet"><circle cx="9.500" cy="9.500" r="8.500" fill="none" stroke="#222" stroke-width="1.300" /><path d="M1 7h17M2 13h8M9.500 1c-5 5-5 12 0 17M9.500 1c3 3 4 5 4 8" fill="none" stroke="#222" stroke-width="1.200" /><circle cx="14.500" cy="14.500" r="4.500" fill="#dcd6e6" stroke="#222" stroke-width="1.300" /><path d="m11.500 17.500 6-6" stroke="#222" stroke-width="1.300" /></svg>
				<span class="lang">ENG</span>
				<svg width="20" height="14" viewBox="0 0 20 14" aria-label="Keyboard"><rect x=".5" y=".5" width="19" height="13" rx="2" fill="none" stroke="#333" /><path d="M3 4h14M3 7h14" stroke="#333" stroke-width="1.500" stroke-dasharray="1.500 1.600" /><path d="M5 10.500h10" stroke="#333" /></svg>
				<svg width="18" height="10" viewBox="0 0 18 10" aria-label="Show hidden icons"><path d="m1 9 8-8 8 8" fill="none" stroke="#222" stroke-width="1.500" /></svg>
			</div>
			<div class="apps">
				<button class="running" aria-label="SOLIDWORKS 2020">
					<svg viewBox="0 0 32 32"><path d="m2 6 14-5 14 5v18l-13 7-15-6z" fill="#d02a20" /><path d="m2 6 14-5 14 5-14 4z" fill="#ec4a3c" /><path d="M16 10v21l14-7V6z" fill="#8c1410" /><text x="4" y="22" class="sw">S</text><text x="16" y="22" class="sw">W</text><text x="12" y="31" class="year">2020</text></svg>
				</button>
				<button aria-label="Terminal"><svg viewBox="0 0 32 32"><path d="M1 5h30v22H1z" fill="#333" /><path d="M1 5h10v4H1z" fill="#aaa" /><path d="M11 5h9v4h-9z" fill="#777" /><path d="m5 12 5 5-5 5" fill="none" stroke="#ddd" stroke-width="3" /><path d="M14 23h10" stroke="#fff" stroke-width="3" /></svg></button>
				<button aria-label="Run"><svg viewBox="0 0 32 32"><path d="M7 8h23l-5 16H2z" fill="#8cdcf8" stroke="#2da3dc" stroke-width="2" /><path d="M11 12h13l-2 8H9z" fill="#e8faff" stroke="#2488c8" stroke-width="2" /><path d="M13 16h7" stroke="#1e7ec0" stroke-width="2" /></svg></button>
				<button aria-label="Chrome"><svg viewBox="0 0 32 32"><circle cx="16" cy="16" r="15" fill="#34a047" /><path d="M16 16 3 8.500A15 15 0 0 1 29 8.500z" fill="#dc2e22" /><path d="M29 8.500A15 15 0 0 1 16 31l7-14-7-8.500z" fill="#f8cb2c" /><circle cx="16" cy="16" r="7.500" fill="#fff" /><circle cx="16" cy="16" r="6" fill="#2a86dc" /></svg></button>
				<button aria-label="Control panel"><svg viewBox="0 0 32 32"><path d="M1.500 5.500h29v21h-29z" fill="#b8e8fa" stroke="#35a6dc" stroke-width="2" /><path d="M11 9a6 6 0 1 0 6 6h-6z" fill="#2488c8" /><path d="M13 8a6 6 0 0 1 6 6h-6z" fill="#f0922a" /><path d="m18 18 3-6 3-3M22 10h5v4h-5zM22 17h5v3h-5z" fill="#2488c8" stroke="#2488c8" /><path d="M5 24h9" stroke="#e08830" stroke-width="2" /><path d="M15 24h12" stroke="#2488c8" stroke-width="2" /></svg></button>
				<button class="idle" aria-label="File Explorer"><svg viewBox="0 0 32 32"><path d="M1 3h10l3 4h17v22H1z" fill="#d89018" /><path d="M1 8h30v21H1z" fill="#fdd04a" /><path d="M6 29v-6q0-2 2-2h16q2 0 2 2v6z" fill="#1c5ea8" /><path d="M10 25h12v4H10z" fill="#3a90d8" /></svg></button>
				<button aria-label="Store"><svg viewBox="0 0 32 32"><path d="M9 9V2h14v7" fill="none" stroke="#2da9e0" stroke-width="2.500" /><path d="M1 7h30v20q0 4-4 4H5q-4 0-4-4z" fill="#173e78" /><path d="M10 13h5v5h-5z" fill="#e83a24" /><path d="M17 13h5v5h-5z" fill="#7cba2c" /><path d="M10 20h5v5h-5z" fill="#2aa5e4" /><path d="M17 20h5v5h-5z" fill="#f8bd24" /></svg></button>
				<button aria-label="Edge"><svg viewBox="0 0 32 32"><circle cx="16" cy="16" r="15" fill="#1c76c8" /><path d="M2 12C6-3 28-2 31 14c1 6-5 9-11 7 3-5-1-10-7-10-5 0-9 3-11 9z" fill="#2cb0d4" /><path d="M18 1c8 1 14 7 13 15-1 5-7 6-11 4 2-4 0-7-3-8z" fill="#36cc68" /><path d="M13 14c-2 5 2 13 14 12 2 0 3-1 2-2-6 1-12-1-12-7 0-3-3-5-4-3z" fill="#f8e4e4" /></svg></button>
				<button aria-label="Chat"><svg viewBox="0 0 32 32"><path d="M16 2C8 2 2 8 2 16s6 14 14 14h13l-2-5c6-12-1-23-11-23z" fill="#5a55c4" /><path d="M7 12h3v8H7zM11 10h12v12H11z" fill="#fff" /></svg></button>
				<button aria-label="Task view"><svg viewBox="0 0 32 32"><path d="M9 9h22v21H9z" fill="#282828" /><path d="M1 2h22v20H1z" fill="#e6e6e6" opacity=".85" /></svg></button>
			</div>
			<form class="os-search" dir="rtl">
				<svg width="20" height="20" viewBox="0 0 20 20"><circle cx="11.500" cy="8" r="6.800" fill="none" stroke="#222" stroke-width="1.700" /><path d="m7 13-5.500 6" stroke="#222" stroke-width="2" /></svg>
				<input type="search" aria-label="بحث" placeholder="بحث" />
			</form>
			<button class="start" aria-label="Start"><svg viewBox="0 0 30 30"><path d="M0 0h14v14H0zM16 0h14v14H16z" fill="#32b4e8" /><path d="M0 16h14v14H0zM16 16h14v14H16z" fill="#2488dc" /></svg></button>
			<button class="widgets" aria-label="Widgets"><svg viewBox="0 0 30 28"><rect width="30" height="28" rx="2" fill="#1260b0" /><path d="M2.500 2.500h12v14h-12z" fill="#84c8f4" /><path d="M2.500 16h12v4h-12z" fill="#22b4d4" /><path d="M2.500 20h12v5h-12z" fill="#1c74cc" /><rect x="16.500" y="2.500" width="11" height="23" rx="1" fill="#fff" /></svg></button>
		</div>

		<div class="watermark">
			<span class="ar" lang="ar">مستقل</span>
			<span class="en">mostaql.com</span>
		</div>
	</body>
</html>
```

FILE: styles.css
```
* {
	box-sizing: border-box;
}

body {
	margin: 0;
	height: 100vh;
	display: flex;
	flex-direction: column;
	position: relative;
	overflow: hidden;
	background: #f7f7f7;
	color: #1c1c1c;
	font-family: "Open Sans", "Noto Sans", "DejaVu Sans", sans-serif;
	font-size: 14px;
}

button {
	display: flex;
	align-items: center;
	justify-content: center;
	margin: 0;
	padding: 0;
	border: 0;
	background: none;
	color: inherit;
	font: inherit;
}

input {
	min-width: 0;
	border: 0;
	outline: 0;
	background: none;
	font: inherit;
}

a {
	color: inherit;
	text-decoration: none;
}

.defs {
	position: absolute;
	width: 0;
	height: 0;
}

.icon {
	width: 18px;
	height: 18px;
	flex: none;
}

.icon-a {
	font: bold 12px "Liberation Serif", serif;
	fill: #2f73a3;
}

.caret,
.drop::after,
.more::after {
	content: "";
	width: 0;
	height: 0;
	flex: none;
	border: 4px solid transparent;
	border-top-color: #444;
	border-bottom: 0;
}

.caret.up {
	border: 3px solid transparent;
	border-bottom-color: #444;
	border-top: 0;
}

/* title bar */
.titlebar {
	display: flex;
	align-items: center;
	height: 40px;
	flex: none;
	padding-right: 4px;
	border-top: 1px solid #808080;
	border-bottom: 1px solid #808080;
}

.brand {
	display: flex;
	gap: 3px;
	width: 146px;
	padding-left: 5px;
	color: #d8291c;
}

.brand-text {
	font: italic 13px/22px "Lato", sans-serif;
}

.brand-text b {
	font-weight: 900;
}

.menu {
	display: flex;
	gap: 17px;
	width: 275px;
	padding-top: 2px;
	line-height: 36px;
	font-size: 13px;
}

.tool {
	width: 28px;
	height: 32px;
}

.drop {
	width: 19px;
	height: 32px;
}

.drop.dim {
	opacity: .6;
}

.quick {
	display: flex;
	align-items: center;
	align-self: stretch;
	margin-right: 5px;
	border-left: 1px solid #b8b8b8;
	padding-left: 20px;
}

.home {
	margin-right: 5px;
}

.select {
	width: 32px;
	margin-left: -2px;
	background: #b0b0b0;
	border: 1px solid #808080;
}

.select-drop {
	width: 14px;
	border: 1px solid #909090;
	border-left: 0;
}

.spaced {
	margin-left: 5px;
}

.select-drop + .spaced {
	margin-left: 3px;
}

.doc-title {
	flex: 1;
	margin: 0;
	padding-right: 4px;
	font-size: 14px;
	font-weight: 400;
	text-align: center;
}

.command-search {
	display: flex;
	align-items: center;
	width: 252px;
	height: 28px;
	gap: 8px;
	padding: 0 5px;
	border: 1px solid #b4b4b4;
	background: #fff;
	color: #888;
}

.command-search input {
	flex: 1;
}

.command-search input::placeholder {
	color: #4f6565;
	opacity: 1;
}

.window-buttons {
	display: flex;
	margin-left: 4px;
	color: #444;
}

.window-buttons button {
	width: 41px;
	height: 32px;
}

/* ribbon */
.ribbon {
	display: grid;
	grid-template-columns: 88px 124px 46px 107px 176px 66px 124px 94px 70px 72px 89px 69px 101px 76px 120px 70px 103px;
	height: 82px;
	flex: none;
	border-bottom: 1px solid #808080;
	padding: 1px 0 2px;
}

.cmd {
	flex-direction: column;
	justify-content: flex-start;
	gap: 2px;
	padding-top: 13px;
	line-height: 19px;
	white-space: nowrap;
	font-size: 13px;
}

.cmd:disabled {
	color: #b4b4b4;
}

.cmd .caret {
	margin-top: 18px;
}

.menu-cmd {
	padding-top: 6px;
}

.group {
	border-left: 1px solid #c0c0c0;
}

.pressed {
	margin: 0 2px 0 1px;
	border: 1px solid #707070;
	padding-top: 12px;
	background: #b0b0b0;
}

/* workspace */
.workspace {
	flex: 1;
	min-height: 0;
	display: flex;
	flex-direction: column;
	background:
		radial-gradient(ellipse 24% 48% at 80% 36%, rgba(216, 219, 232, .8), rgba(221, 225, 236, .5) 55%, rgba(230, 233, 242, 0)),
		linear-gradient(90deg, rgba(255, 255, 255, 0) 50%, rgba(230, 233, 242, .8) 75%, rgba(238, 239, 243, .8)) top / 100% 50% no-repeat,
		linear-gradient(#fff 22%, #f3f5f9 40%, #e2e6f0 53%, #e6e9f2 58%, #f5f6f9 64%, #fff 74%, #fff 84%, #f7f8fa);
}

.tab-row {
	display: flex;
	height: 28px;
	flex: none;
}

.tabs {
	display: grid;
	grid-template-columns: 89px 63px 62px 70px 74px 173px 56px 97px 170px 90px;
	line-height: 28px;
	text-align: center;
	white-space: nowrap;
}

.tabs a {
	height: 28px;
	border-right: 1px solid #808080;
	border-bottom: 1px solid #808080;
	background: #d4d4d4;
}

.tabs .active {
	background: #f7f7f7;
	font-weight: 700;
	color: #333;
}

.heads-up {
	display: flex;
	align-items: center;
	padding: 3px 0 0 18px;
}

.heads-up button {
	width: 26px;
	height: 25px;
}

.heads-up .on {
	border: 1px solid #555;
	background: #9a9a9a;
}

.heads-up .light {
	margin-left: 1px;
	border-color: #808080;
	background: #b8b8bc;
}

.heads-up .more {
	width: 14px;
}

.more::after {
	opacity: .6;
}

.heads-up .boxed {
	width: 13px;
	border: 1px solid #a0a0a0;
	border-left: 0;
	background: #f2f2f4;
}

.doc-buttons {
	display: flex;
	margin: 2px 7px 0 auto;
	color: #888;
}

.doc-buttons button {
	width: 26px;
	height: 26px;
}

.stage {
	display: flex;
	flex: 1;
	min-height: 0;
	position: relative;
}

/* feature tree panel */
.panel {
	display: flex;
	flex-direction: column;
	width: 366px;
	flex: none;
	padding-right: 3px;
	border-right: 1px solid #808080;
	background: #f7f7f7;
}

.grip {
	display: flex;
	align-items: center;
	justify-content: center;
	height: 21px;
	flex: none;
	margin-top: 4px;
	border: 1px solid #c0c0c0;
	border-width: 1px 0;
}

.grip::after {
	content: "";
	width: 6px;
	height: 6px;
	border: 1px solid #888;
	border-radius: 50%;
	background: #ccc;
}

.panel-tabs {
	display: flex;
	height: 26px;
	flex: none;
	margin-top: 4px;
	padding-left: 2px;
	border-bottom: 1px solid #808080;
}

.panel-tabs button {
	width: 40px;
	border-top: 1px solid #808080;
	border-right: 1px solid #808080;
	background: #d4d4d4;
}

.panel-tabs .active {
	background: #f7f7f7;
}

.panel-tabs .expand {
	width: 20px;
	margin-left: auto;
	border: 0;
	background: none;
}

.filter {
	display: flex;
	align-items: center;
	gap: 1px;
	height: 31px;
	flex: none;
	margin: 0 3px 0 5px;
	padding-left: 2px;
	border: 1px solid #c0c0c0;
}

.filter .caret {
	border-width: 3px 3px 0;
	margin-top: 6px;
}

.filter input {
	flex: 1;
}

.tree-box {
	display: flex;
	flex: 1;
	min-height: 0;
	border-left: 1px solid #b8b8b8;
}

.tree {
	flex: 1;
	min-width: 0;
	margin: 0;
	padding: 1px 0 0;
	overflow: hidden;
	list-style: none;
	line-height: 24px;
	white-space: nowrap;
}

.tree li {
	display: flex;
	align-items: center;
	height: 24px;
	padding-left: 28px;
}

.tree .root {
	padding-left: 6px;
}

.tree .sub {
	padding-left: 51px;
}

.tree .red {
	color: #d03322;
}

.tree .olive {
	color: #9b811c;
}

.tree span {
	margin-left: 6px;
}

.state {
	width: 16px;
	height: 16px;
	flex: none;
	margin-left: 7px;
}

.twist {
	width: 20px;
	height: 24px;
	flex: none;
	display: flex;
	align-items: center;
	justify-content: flex-start;
	padding-left: 3px;
}

button.twist::after {
	content: "";
	border: 4px solid transparent;
	border-left: 5px solid #666;
	border-right: 0;
}

button.twist.open {
	padding-left: 1px;
}

button.twist.open::after {
	border: 4px solid transparent;
	border-top: 5px solid #666;
	border-bottom: 0;
}

.vscroll {
	width: 18px;
	padding: 61px 5px 0 6px;
	background: #f0f0f0;
}

.vscroll i {
	display: block;
	height: 104px;
	background: #878787;
}

.hscroll {
	height: 21px;
	flex: none;
	margin-bottom: 4px;
	padding: 7px 0 0 22px;
	background: #f0f0f0;
}

.hscroll i {
	display: block;
	width: 140px;
	height: 6px;
	background: #878787;
}

/* graphics area */
.canvas {
	flex: 1;
	min-width: 0;
	position: relative;
}

.model {
	display: block;
	width: 100%;
	height: 100%;
}

.triad {
	font: 10px "Liberation Sans", sans-serif;
}

.view-name {
	position: absolute;
	left: 11px;
	bottom: 2px;
	margin: 0;
	color: #111;
	font: 17px/18px "Liberation Sans", sans-serif;
}

.splitter {
	position: absolute;
	left: -1px;
	top: 375px;
	width: 12px;
	height: 49px;
	border: 1px solid #808080;
	border-left-color: #f7f7f7;
	background: #f7f7f7;
}

.splitter::after {
	content: "";
	width: 5px;
	height: 5px;
	border: 1px solid #888;
	border-radius: 50%;
	background: #ccc;
}

.task-pane {
	position: absolute;
	right: 0;
	top: 30px;
	width: 33px;
	border: 1px solid #808080;
	border-width: 1px 0 0 1px;
}

.task-pane button {
	width: 100%;
	height: 30px;
	border-bottom: 1px solid #808080;
	background: #d4d4d4;
}

.task-pane .active {
	background: #fff;
}

/* bottom tabs and status */
.model-tabs {
	display: flex;
	height: 21px;
	flex: none;
	border-top: 1px solid #808080;
	border-bottom: 1px solid #808080;
	font-size: 15px;
	line-height: 19px;
	text-align: center;
}

.model-tabs a {
	width: 89px;
	border-right: 1px solid #808080;
	background: #d4d4d4;
}

.model-tabs .active {
	width: 77px;
	background: #f7f7f7;
	font-weight: 700;
	color: #000;
}

.model-tabs .wide {
	width: 144px;
	padding-right: 12px;
}

.steps {
	display: flex;
	padding-left: 2px;
}

.steps button {
	width: 20px;
	border: 1px solid #8694a0;
	background: #a5b2be;
}

.steps svg {
	width: 12px;
	height: 12px;
	fill: #7c8690;
	stroke: #7c8690;
}

.status {
	display: flex;
	align-items: center;
	height: 21px;
	flex: none;
	padding: 3px 46px 0 1px;
	line-height: 18px;
}

.product {
	flex: 1;
}

.editing {
	width: 239px;
	margin-left: 18px;
}

.status .caret {
	margin-left: 25px;
}

/* taskbar */
.taskbar {
	display: flex;
	align-items: center;
	height: 60px;
	flex: none;
	padding: 0 26px 0 24px;
	background: linear-gradient(90deg, #dcd7e6, #dfd6e7 25%, #e8d6ea 35%, #f7e3e4 46%, #f6e1e1 62%, #efd6d6 72%, #ecd7d2 80%, #e9d6d4);
}

.tray {
	display: flex;
	align-items: center;
	width: 438px;
	color: #222;
}

.tray > * {
	flex: none;
	margin-right: 10px;
}

.badge {
	width: 20px;
	height: 20px;
	border-radius: 50%;
	background: #1eb7dc;
	color: #fff;
	font: 13px/20px "DejaVu Sans", sans-serif;
	text-align: center;
}

.clock {
	display: flex;
	flex-direction: column;
	width: 72px;
	font: 13px/20px "DejaVu Sans", sans-serif;
	white-space: nowrap;
}

.clock span {
	text-align: left;
}

.tray .lang {
	margin: 0 28px 0 12px;
}

.tray .lang + svg {
	margin-right: 26px;
}

.apps {
	display: flex;
	width: 653px;
	gap: 17px;
	padding-left: 8px;
}

.apps button {
	position: relative;
	width: 48px;
	height: 48px;
	border-radius: 5px;
}

.apps svg {
	width: 30px;
	height: 30px;
}

.apps .running {
	background: rgba(255, 255, 255, .6);
}

.running::after,
.idle::after {
	content: "";
	position: absolute;
	bottom: 0;
	width: 20px;
	height: 4px;
	border-radius: 2px;
	background: #1eb7dc;
}

.idle::after {
	width: 8px;
	background: #8a8080;
}

.sw {
	font: bold 14px "Liberation Sans", sans-serif;
	fill: #fff;
}

.year {
	font: bold 8px "Liberation Sans", sans-serif;
	fill: #fff;
	stroke: #222;
	stroke-width: 2px;
	paint-order: stroke;
}

.os-search {
	display: flex;
	align-items: center;
	width: 273px;
	height: 38px;
	gap: 12px;
	padding: 0 13px;
	border-radius: 19px;
	border-bottom: 1px solid #c8b4b4;
	background: #fbf5f5;
}

.os-search input {
	flex: 1;
	font: 16px "DejaVu Sans", sans-serif;
}

.os-search input::placeholder {
	color: #6a6464;
	opacity: 1;
}

.start {
	margin-left: 23px;
}

.start svg {
	width: 29px;
	height: 29px;
}

.widgets {
	margin-left: auto;
}

.widgets svg {
	width: 30px;
	height: 28px;
}

/* site mark over the lower edge */
.watermark {
	position: absolute;
	left: 50%;
	bottom: 18px;
	width: 232px;
	margin-left: -116px;
	color: rgba(120, 120, 120, .2);
	font-weight: 700;
	text-align: center;
	white-space: nowrap;
	pointer-events: none;
}

.watermark span {
	display: block;
}

.watermark .ar {
	font-family: "DejaVu Sans", sans-serif;
	font-size: 65px;
	line-height: 76px;
}

.watermark .en {
	font-family: "Liberation Sans", sans-serif;
	font-size: 37px;
	line-height: 42px;
}
```
